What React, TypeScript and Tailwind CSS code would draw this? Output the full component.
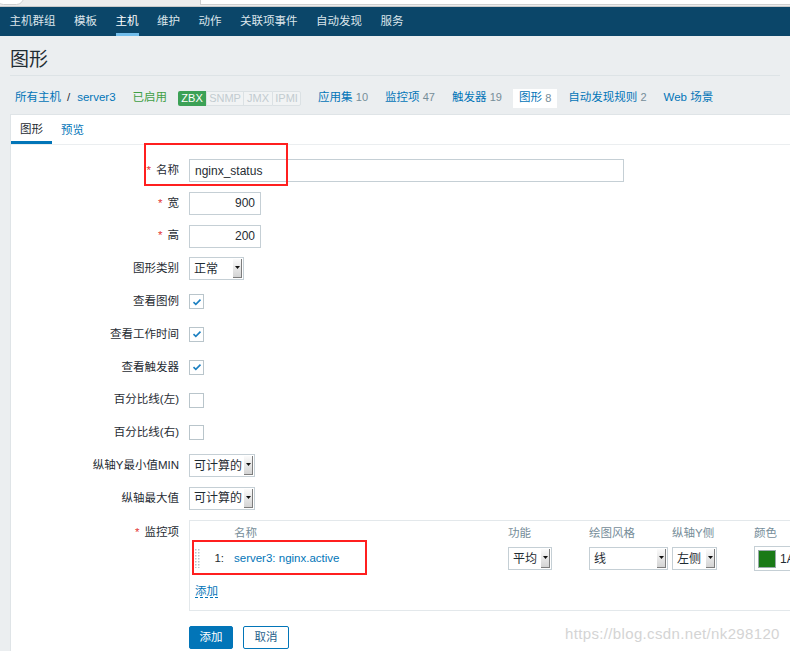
import React from "react"

const navItems = ["主机群组", "模板", "主机", "维护", "动作", "关联项事件", "自动发现", "服务"]

function Arrow() {
  return (
    <div className="my-[1px] mr-[1px] flex w-[9px] shrink-0 justify-center border-r border-b border-[#7d7d7d] bg-gradient-to-b from-[#fbfbfb] to-[#d4d4d4] pt-[7px]">
      <svg width="5" height="3" viewBox="0 0 5 3">
        <path d="M0 0h5L2.5 3z" fill="#111" />
      </svg>
    </div>
  )
}

function Select({ value, w }: { value: string; w: string }) {
  return (
    <div className={`flex h-[23px] items-stretch border border-[#c5cfd5] bg-white ${w}`}>
      <span className="flex flex-1 items-center pl-[4px] text-[12px] text-[#1f2c33]">{value}</span>
      <Arrow />
    </div>
  )
}

function Check({ on }: { on?: boolean }) {
  return (
    <div className="flex h-[15px] w-[15px] items-center justify-center border border-[#b9c5cb] bg-white">
      {on && (
        <svg width="10" height="8" viewBox="0 0 10 8">
          <path d="M1.5 4.2 3.8 6.3 8.5 1.6" fill="none" stroke="#1a7fc1" strokeWidth="1.6" />
        </svg>
      )}
    </div>
  )
}

function Row({ label, req, top, children }: { label: string; req?: boolean; top?: boolean; children: React.ReactNode }) {
  return (
    <div className={`flex ${top ? "items-start" : "h-[23px] items-center"}`}>
      <div className={`w-[168px] shrink-0 text-right text-[#1f2c33] ${top ? "pt-[4px]" : ""}`}>
        {req && <span className="mr-[5px] text-[#e33734]">*</span>}
        {label}
      </div>
      <div className="ml-[10px] shrink-0">{children}</div>
    </div>
  )
}

function Handle() {
  return (
    <svg width="5" height="19" viewBox="0 0 5 19">
      {[0, 3, 6, 9, 12, 15, 18].map((y) => (
        <g key={y}>
          <rect x="0" y={y} width="1.5" height="1.5" fill="#b7c2c8" />
          <rect x="3" y={y} width="1.5" height="1.5" fill="#b7c2c8" />
        </g>
      ))}
    </svg>
  )
}

export default function App() {
  return (
    <div className="relative h-[651px] w-[790px] overflow-hidden bg-[#ebeef0] font-[family-name:'Liberation_Sans','Noto_Sans_CJK_SC',sans-serif] text-[11.5px]">
      {/* browser chrome */}
      <div className="relative h-[7px] border-b border-[#c9c9c9] bg-[#ececec]">
        <div className="absolute -top-[10px] left-[-4px] h-[15px] w-[28px] rounded-full border border-[#cfcfcf] bg-white" />
        <div className="absolute top-0 left-[200px] h-[5px] w-[600px] border-b border-l border-[#cfcfcf] bg-white" />
      </div>

      {/* top nav */}
      <div className="flex h-[29px] items-stretch gap-[18.5px] bg-[#0b4669] pl-[9.5px]">
        {navItems.map((n) => (
          <div
            key={n}
            className={`flex items-center border-b-[3px] pt-[3px] ${
              n === "主机" ? "border-[#72bdeb] text-white" : "border-transparent text-[#dbe5eb]"
            }`}
          >
            {n}
          </div>
        ))}
      </div>

      {/* title */}
      <div className="mx-[10px] flex h-[40px] items-center border-b border-[#dde3e6] pt-[9px]">
        <h1 className="text-[19px] text-[#1f2c33]">图形</h1>
      </div>

      {/* breadcrumb */}
      <div className="flex h-[38px] items-center pl-[15px] pt-[6px] text-[#0275b8]">
        <span>所有主机</span>
        <span className="ml-[6px] text-[#1f2c33]">/</span>
        <span className="ml-[7px]">server3</span>
        <span className="ml-[17px] text-[#3f9f45]">已启用</span>
        <div className="ml-[11px] flex h-[15px] text-[11px]">
          <span className="flex w-[28px] items-center justify-center rounded-l-[2px] bg-[#3ca156] text-white">ZBX</span>
          <span className="flex w-[38px] items-center justify-center border border-[#dbe1e4] bg-[#f1f3f4] text-[#c2cbd0]">SNMP</span>
          <span className="flex w-[28px] items-center justify-center border-y border-[#dbe1e4] bg-[#f1f3f4] text-[#c2cbd0]">JMX</span>
          <span className="flex w-[29px] items-center justify-center rounded-r-[2px] border border-[#dbe1e4] bg-[#f1f3f4] text-[#c2cbd0]">IPMI</span>
        </div>
        <div className="ml-[11px] flex items-center gap-[5px]">
          <span className="px-[6px]">应用集 <span className="text-[11px] text-[#768d99]">10</span></span>
          <span className="px-[6px]">监控项 <span className="text-[11px] text-[#768d99]">47</span></span>
          <span className="px-[6px]">触发器 <span className="text-[11px] text-[#768d99]">19</span></span>
          <span className="flex h-[19px] items-center bg-white px-[6px]">
            图形&nbsp;<span className="text-[11px] text-[#768d99]">8</span>
          </span>
          <span className="px-[6px]">自动发现规则 <span className="text-[11px] text-[#768d99]">2</span></span>
          <span className="px-[6px]">Web 场景</span>
        </div>
      </div>

      {/* panel */}
      <div className="ml-[10px] h-[560px] w-[800px] border-l border-t border-[#dfe4e7] bg-white">
        <div className="flex h-[30px] border-b border-[#ebeef0]">
          <div className="flex items-center border-b-[3px] border-[#0275b8] px-[9px] pt-[3px] text-[#1f2c33]">图形</div>
          <div className="flex items-center px-[9px] pt-[3px] text-[#0275b8]">预览</div>
        </div>

        <div className="flex flex-col gap-[9.8px] pt-[14px]">
          <Row label="名称" req>
            <div className="flex h-[23px] w-[435px] items-center border border-[#c5cfd5] pl-[5px] text-[12px] text-[#1f2c33]">nginx_status</div>
          </Row>
          <Row label="宽" req>
            <div className="flex h-[23px] w-[72px] items-center justify-end border border-[#c5cfd5] pr-[5px] text-[12px] text-[#1f2c33]">900</div>
          </Row>
          <Row label="高" req>
            <div className="flex h-[23px] w-[72px] items-center justify-end border border-[#c5cfd5] pr-[5px] text-[12px] text-[#1f2c33]">200</div>
          </Row>
          <Row label="图形类别">
            <Select value="正常" w="w-[55px]" />
          </Row>
          <Row label="查看图例"><Check on /></Row>
          <Row label="查看工作时间"><Check on /></Row>
          <Row label="查看触发器"><Check on /></Row>
          <Row label="百分比线(左)"><Check /></Row>
          <Row label="百分比线(右)"><Check /></Row>
          <Row label="纵轴Y最小值MIN">
            <Select value="可计算的" w="w-[66px]" />
          </Row>
          <Row label="纵轴最大值">
            <Select value="可计算的" w="w-[66px]" />
          </Row>
          <Row label="监控项" req top>
            <div className="w-[720px] border border-[#e3e8eb] pb-[10px] pl-[4px] pt-[6px]">
              <div className="flex h-[14px] items-center text-[#768d99]">
                <span className="ml-[40px] w-[274px] shrink-0">名称</span>
                <span className="w-[81px] shrink-0">功能</span>
                <span className="w-[83px] shrink-0">绘图风格</span>
                <span className="w-[82px] shrink-0">纵轴Y侧</span>
                <span>颜色</span>
              </div>
              <div className="mt-[6px] flex h-[24px] items-center">
                <div className="w-[15px] shrink-0 pl-[1px]"><Handle /></div>
                <span className="w-[25px] shrink-0 pr-[10px] text-right text-[#1f2c33]">1:</span>
                <span className="w-[274px] shrink-0 text-[#0275b8]">server3: nginx.active</span>
                <div className="w-[81px] shrink-0"><Select value="平均" w="w-[44px]" /></div>
                <div className="w-[83px] shrink-0"><Select value="线" w="w-[79px]" /></div>
                <div className="w-[82px] shrink-0"><Select value="左侧" w="w-[45px]" /></div>
                <div className="flex h-[25px] w-[80px] shrink-0 items-center border border-[#c5cfd5] pl-[3px]">
                  <div className="h-[18px] w-[18px] border border-[#9aa] bg-[#1a7a17]" />
                  <span className="ml-[4px] text-[12px] text-[#1f2c33]">1A</span>
                </div>
              </div>
              <div className="mt-[12px] pl-[1px]">
                <span className="border-b border-dashed border-[#0275b8] text-[#0275b8]">添加</span>
              </div>
            </div>
          </Row>
          <div className="ml-[178px] mt-[5px] flex gap-[10px]">
            <button className="h-[23px] w-[44px] rounded-[2px] border border-[#0275b8] bg-[#0275b8] text-white">添加</button>
            <button className="h-[23px] w-[46px] rounded-[2px] border border-[#0275b8] bg-white text-[#1f5f8b]">取消</button>
          </div>
        </div>
      </div>

      {/* annotations */}
      <div className="absolute left-[144px] top-[143px] h-[43px] w-[144px] border-2 border-[#ff1f1f]" />
      <div className="absolute left-[192px] top-[540px] h-[35px] w-[175px] border-2 border-[#ff1f1f]" />
      <div className="absolute left-[565px] top-[623px] font-[family-name:'Liberation_Sans',sans-serif] text-[15px] tracking-[0.35px] text-[#d4d4d4]">
        https://blog.csdn.net/nk298120
      </div>
    </div>
  )
}
